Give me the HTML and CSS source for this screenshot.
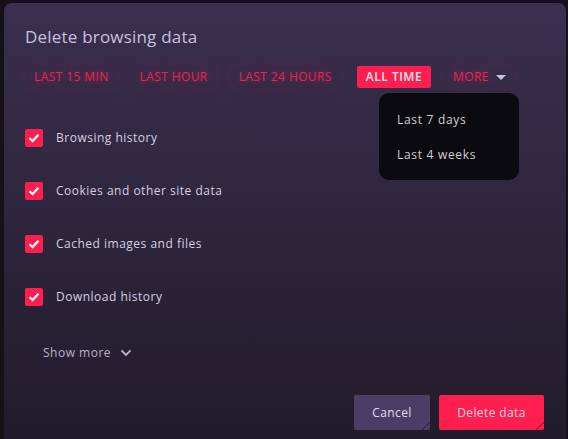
FILE: index.html
```html
<!DOCTYPE html>
<html>
<head>
    <title>Delete browsing data</title>
    <link rel="stylesheet" href="styles.css">
</head>
<body>

<div class="dialog">
    <div class="title">Delete browsing data</div>

    <div class="tabs">
        <span class="tab">LAST 15 MIN</span>
        <span class="tab">LAST HOUR</span>
        <span class="tab">LAST 24 HOURS</span>
        <span class="tab active">ALL TIME</span>
        <span class="tab more">MORE <span class="caret"></span></span>

        <div class="menu">
            <div class="menu-item">Last 7 days</div>
            <div class="menu-item">Last 4 weeks</div>
        </div>
    </div>

    <div class="options">
        <label class="option">
            <span class="box"><svg width="12" height="10" viewBox="0 0 12 10"><path d="M1.5 5.2 L4.6 8 L10.5 1.8" fill="none" stroke="#fff" stroke-width="2.2"/></svg></span>
            Browsing history
        </label>
        <label class="option">
            <span class="box"><svg width="12" height="10" viewBox="0 0 12 10"><path d="M1.5 5.2 L4.6 8 L10.5 1.8" fill="none" stroke="#fff" stroke-width="2.2"/></svg></span>
            Cookies and other site data
        </label>
        <label class="option">
            <span class="box"><svg width="12" height="10" viewBox="0 0 12 10"><path d="M1.5 5.2 L4.6 8 L10.5 1.8" fill="none" stroke="#fff" stroke-width="2.2"/></svg></span>
            Cached images and files
        </label>
        <label class="option">
            <span class="box"><svg width="12" height="10" viewBox="0 0 12 10"><path d="M1.5 5.2 L4.6 8 L10.5 1.8" fill="none" stroke="#fff" stroke-width="2.2"/></svg></span>
            Download history
        </label>
    </div>

    <div class="show-more">
        Show more
        <svg width="12" height="8" viewBox="0 0 12 8"><path d="M1.5 1.5 L6 6 L10.5 1.5" fill="none" stroke="#b9b1c9" stroke-width="1.8"/></svg>
    </div>

    <div class="footer">
        <button class="btn cancel">Cancel</button>
        <button class="btn danger">Delete data</button>
    </div>
</div>

</body>
</html>
```

FILE: styles.css
```css
body {
    margin: 0;
    background-color: #141118;
    font-family: 'Open Sans', sans-serif;
    height: 439px;
    overflow: hidden;
}

.dialog {
    margin: 3px 2px 0 4px;
    height: 436px;
    box-sizing: border-box;
    padding: 23px 22px 9px 21px;
    border-radius: 8px 8px 0 0;
    background: linear-gradient(#3a2f4f, #211c2b);
    display: flex;
    flex-direction: column;
}

.title {
    font-size: 17px;
    line-height: 22px;
    letter-spacing: 0.2px;
    color: #c9c0db;
}

.tabs {
    position: relative;
    display: flex;
    gap: 13px;
    margin-top: 18px;
}

.tab {
    font-size: 12px;
    line-height: 22px;
    padding: 0 9px;
    color: #e8254f;
    letter-spacing: 0.4px;
    border-radius: 10px;
    text-shadow: 0 0 8px rgba(255, 31, 79, 0.55);
    box-shadow: 0 0 10px 4px rgba(255, 31, 79, 0.05);
}

.tab.active {
    margin-left: 3px;
    background: #ff1f4f;
    color: #f4e6ee;
    font-weight: 600;
    letter-spacing: 0.5px;
    border-radius: 2px;
    text-shadow: none;
    box-shadow: none;
}

.tab.more {
    display: flex;
    align-items: center;
    gap: 7px;
}

.caret {
    width: 0;
    height: 0;
    border-left: 5px solid transparent;
    border-right: 5px solid transparent;
    border-top: 5px solid #c9bfe0;
}

.menu {
    position: absolute;
    left: 354px;
    top: 27px;
    width: 140px;
    height: 87px;
    box-sizing: border-box;
    padding: 17px 18px;
    background: #0b0a0f;
    border-radius: 10px;
    display: flex;
    flex-direction: column;
    gap: 15px;
}

.menu-item {
    font-size: 12px;
    line-height: 20px;
    letter-spacing: 0.7px;
    color: #d2cdd8;
}

.options {
    margin-top: 23px;
    display: flex;
    flex-direction: column;
}

.option {
    height: 53px;
    display: flex;
    align-items: center;
    gap: 13px;
    font-size: 12px;
    letter-spacing: 0.5px;
    color: #d6d0e2;
}

.box {
    width: 18px;
    height: 18px;
    border-radius: 2px;
    background: #ff1f4f;
    display: flex;
    align-items: center;
    justify-content: center;
}

.show-more {
    margin: 20px 0 0 18px;
    display: flex;
    align-items: center;
    gap: 9px;
    font-size: 12px;
    line-height: 20px;
    letter-spacing: 0.5px;
    color: #b9b1c9;
}

.footer {
    margin-top: auto;
    display: flex;
    justify-content: flex-end;
    gap: 9px;
}

.btn {
    position: relative;
    border: none;
    border-radius: 2px;
    height: 35px;
    padding: 0 18px;
    font-family: 'Open Sans', sans-serif;
    font-size: 12px;
    letter-spacing: 0.4px;
}

.btn::after {
    content: '';
    position: absolute;
    right: 0;
    bottom: 0;
    width: 8px;
    height: 8px;
    background: linear-gradient(135deg, transparent 45%, rgba(0, 0, 0, 0.45) 50%, transparent 58%);
}

.cancel {
    background: #4b3e66;
    color: #e2dcef;
    width: 76px;
}

.danger {
    background: #ff1f4f;
    color: #f6d6e0;
    width: 105px;
}
```
